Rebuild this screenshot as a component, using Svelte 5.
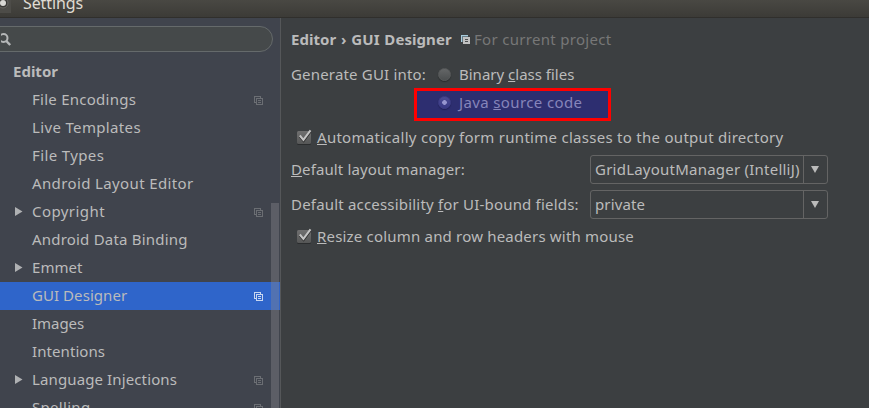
<script>
  const items = [
    { label: 'File Encodings', project: true, track: 0.26 },
    { label: 'Live Templates', track: 0.35 },
    { label: 'File Types', track: 0.38 },
    { label: 'Android Layout Editor', track: 0.37 },
    { label: 'Copyright', parent: true, project: true, track: 0.43 },
    { label: 'Android Data Binding', track: 0.2 },
    { label: 'Emmet', parent: true, track: 0.05 },
    { label: 'GUI Designer', project: true, selected: true, track: 0.06 },
    { label: 'Images', track: -0.05 },
    { label: 'Intentions', track: 0.08 },
    { label: 'Language Injections', parent: true, project: true, track: 0.12 },
    { label: 'Spelling', project: true, track: 0.3 }
  ];
</script>

{#snippet copyIcon()}
  <svg class="copy" width="9" height="9" viewBox="0 0 9 9" fill="none" stroke="currentColor" shape-rendering="crispEdges">
    <path d="M2 6.500H.5V.5h6V2M2.500 2.500h6v6h-6zM4 4.500h3M4 6.500h3" />
  </svg>
{/snippet}

{#snippet check()}
  <svg class="check" width="16" height="16" viewBox="0 0 16 16">
    <defs>
      <linearGradient id="box" x1="0" y1="0" x2="0" y2="1">
        <stop offset="0" stop-color="#707070" /><stop offset="1" stop-color="#555656" />
      </linearGradient>
    </defs>
    <rect x="1" y="3" width="14" height="13" rx="1.500" fill="#2b2d2e" />
    <rect x="1" y="2" width="14" height="13" rx="1.500" fill="url(#box)" />
    <path d="M3.800 7.500l3.800 4.500L14.500 2.500" fill="none" stroke="#303030" stroke-width="2.200" />
    <path d="M3.800 6.500l3.600 4.300L14.500 1.300" fill="none" stroke="#c4c4c4" stroke-width="2" />
  </svg>
{/snippet}

<div class="window">
  <header>
    <svg width="12" height="14" viewBox="0 0 12 14">
      <rect width="11" height="13" fill="#4d4c48" />
      <circle cx="3" cy="3" r="5" fill="#393835" stroke="#686763" />
      <circle cx="3" cy="3" r="3" fill="#d8d7d3" />
    </svg>
    <span>Settings</span>
  </header>
  <div class="body">
    <aside>
      <div class="search">
        <svg width="12" height="14" viewBox="0 0 12 14" fill="none" stroke="#b4b6b7">
          <circle cx="2.500" cy="5" r="4" stroke-width="2" />
          <path d="M5.300 8l3.900 4" stroke-width="2.500" />
        </svg>
      </div>
      <nav>
        <div class="row root"><span>Editor</span></div>
        {#each items as item}
          <div class="row" class:selected={item.selected}>
            <span class="twist">
              {#if item.parent}<svg width="8" height="9" viewBox="0 0 8 9"><path d="M0 0l7.500 4.500L0 9z" fill="#afb1b3" /></svg>{/if}
            </span>
            <span class="label" style:letter-spacing="{item.track}px">{item.label}</span>
            {#if item.project}{@render copyIcon()}{/if}
          </div>
        {/each}
      </nav>
      <div class="thumb"></div>
    </aside>
    <main>
      <h1>
        <b>Editor › GUI Designer</b>
        <svg width="9" height="9" viewBox="0 0 9 9" shape-rendering="crispEdges">
          <path d="M0 0h7v1H1v6H0z" fill="#a7cbdc" />
          <path d="M1 1h6v1H2v5H1z" fill="#667b86" />
          <path d="M2 2h7v7H2z" fill="#c1c1c1" />
          <path d="M4 4h3v1H4zM4 6h3v1H4z" fill="#4b4e50" />
        </svg>
        <span>For current project</span>
      </h1>
      <div class="generate">
        <span class="caption">Generate GUI into:</span>
        <div class="options">
          <div class="option"><i class="radio"></i><span>Binary <u>c</u>lass files</span></div>
          <div class="option marked"><i class="radio"></i><span>Java <u>s</u>ource code</span></div>
        </div>
      </div>
      <div class="checkrow first">{@render check()}<span><u>A</u>utomatically copy form runtime classes to the output directory</span></div>
      <div class="field">
        <span class="t14"><u>D</u>efault layout manager:</span>
        <div class="combo"><span class="t26">GridLayoutManager (IntelliJ)</span><i><svg width="8" height="7" viewBox="0 0 8 7"><path d="M0 0h8L4 7z" fill="#bbb" /></svg></i></div>
      </div>
      <div class="field">
        <span class="t19">Default accessibility <u>f</u>or UI-bound fields:</span>
        <div class="combo"><span class="t14">private</span><i><svg width="8" height="7" viewBox="0 0 8 7"><path d="M0 0h8L4 7z" fill="#bbb" /></svg></i></div>
      </div>
      <div class="checkrow last">{@render check()}<span><u>R</u>esize column and row headers with mouse</span></div>
    </main>
  </div>
</div>

<style>
  .window {
    width: 869px; height: 408px; overflow: hidden; display: flex; flex-direction: column;
    background: #3c3f41; color: #bbb; font: 15px/28px "Noto Sans", sans-serif; white-space: nowrap;
  }
  .window * { box-sizing: border-box; }
  svg { display: block; flex: none; }
  header {
    height: 18px; flex: none; display: flex; overflow: hidden; color: #dfdbd2;
    background: linear-gradient(#494843, #3c3b37); border-bottom: 1px solid #302f2c;
  }
  header span { margin: -11px 0 0 11px; font-size: 16px; letter-spacing: -.1px; }
  .body { flex: 1; min-height: 0; display: flex; }
  aside {
    width: 281px; flex: none; position: relative; overflow: hidden;
    background: #40444d; border-right: 1px solid #555759;
  }
  .search {
    width: 293px; height: 26px; margin: 8px 0 6px -20px; padding: 6px 0 0 20px;
    border: 1px solid #656a6b; border-radius: 13px; background: #45494a;
  }
  .row { height: 28px; display: flex; align-items: center; width: 280px; }
  .root { padding-left: 13px; font-weight: 700; }
  .root span, .label { margin-top: -2px; }
  .twist { width: 32px; padding: 0 0 1px 15px; }
  .label { width: 222px; }
  .copy { color: #6b6e73; }
  .selected { background: #2f65ca; }
  .selected .copy { color: #c8d6f0; }
  .thumb { position: absolute; left: 271px; top: 185px; width: 8px; height: 220px; background: rgba(136, 136, 140, .4); }
  main { flex: 1; padding: 8px 0 0 10px; display: flex; flex-direction: column; }
  h1 { margin: 0; height: 28px; display: flex; align-items: center; font: inherit; }
  h1 b { width: 160px; letter-spacing: .06px; word-spacing: .8px; }
  h1 b, h1 span { margin-top: -2px; }
  h1 svg { margin: -1px 4px 0 10px; }
  h1 span { color: #777; letter-spacing: .3px; }
  .generate { display: flex; margin-top: 7px; height: 63px; }
  .caption { width: 123px; flex: none; margin-top: -1px; letter-spacing: .18px; }
  .option { height: 28px; display: flex; align-items: center; padding-left: 24px; }
  .option span { margin: -2px 0 0 8px; }
  .radio {
    width: 13px; height: 13px; flex: none; border-radius: 50%; margin-top: -2px;
    background: linear-gradient(#646667, #4c4f50); box-shadow: 0 1px 1px #292c2d; border: 1px solid #565859;
  }
  .marked {
    width: 197px; height: 33px; border: 3px solid #f00; background: #2d2e70; color: #8685ba;
    padding: 0 0 3px 21px; margin-top: -1px; letter-spacing: .37px;
  }
  .marked .radio { margin-top: -1px; border-color: #3c3c83; background: radial-gradient(circle, #9695cf 0 2px, transparent 2.600px), linear-gradient(#4a4a91, #393985); box-shadow: 0 1px 1px #202055; }
  .checkrow { height: 28px; display: flex; align-items: center; padding-left: 5px; }
  .checkrow svg { margin: -3px 5px 0 0; }
  .checkrow span { margin-top: -3px; }
  .first { margin-bottom: 3px; letter-spacing: .28px; }
  .field { display: flex; width: 537px; height: 29px; justify-content: space-between; align-items: center; margin-bottom: 6px; }
  .field > span, .combo span { margin-top: -2px; }
  .combo { width: 238px; height: 29px; border: 1px solid #646464; border-radius: 3px; display: flex; align-items: center; padding-left: 4px; }
  .combo span { width: 208px; flex: none; }
  .combo i { width: 24px; height: 27px; border-left: 1px solid #646464; padding: 10px 0 0 7px; }
  .t14 { letter-spacing: .12px; }
  .t19 { letter-spacing: .19px; }
  .t26 { letter-spacing: .23px; }
  .last { margin-top: -2px; letter-spacing: .19px; }
  u { text-decoration-thickness: 1px; text-underline-offset: 1px; text-decoration-skip-ink: none; }
</style>
